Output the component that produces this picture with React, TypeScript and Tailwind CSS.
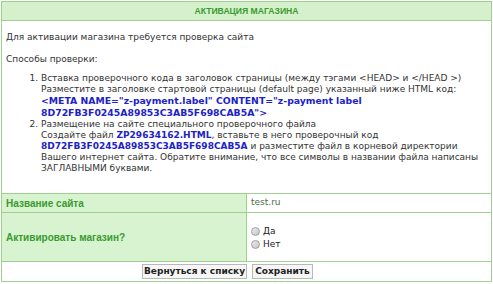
import React from "react";

const blue = "text-[#1c22c8] font-bold";
const arial = "font-['Liberation_Sans',_Arial,_sans-serif]";

export default function App() {
  return (
    <div className="w-[493px] h-[284px] bg-white font-['DejaVu_Sans',_Verdana,_sans-serif] text-[9px] text-[#333] pt-px pl-px">
      <div className="w-[491px] border border-[#9fd08f]">
        <div className={`h-[19px] bg-[#d5f1cc] border-b border-[#9fd08f] flex items-center justify-center text-[#3a9a2f] font-bold text-[8.6px] ${arial}`}>
          АКТИВАЦИЯ МАГАЗИНА
        </div>
        <div className="h-[172px] px-[4px] pt-[11px] leading-[11px]">
          <div>Для активации магазина требуется проверка сайта</div>
          <div className="mt-[11px]">Способы проверки:</div>
          <ol className="mt-[8px] pl-[35px] list-decimal">
            <li>
              Вставка проверочного кода в заголовок страницы (между тэгами &lt;HEAD&gt; и &lt;/HEAD &gt;)
              <br />
              Разместите в заголовке стартовой страницы (default page) указанный ниже HTML код:
              <br />
              <span className={`${blue} text-[9.3px]`}>
                &lt;META NAME="z-payment.label" CONTENT="z-payment label
                <br />
                8D72FB3F0245A89853C3AB5F698CAB5A"&gt;
              </span>
            </li>
            <li>
              Размещение на сайте специального проверочного файла
              <br />
              Создайте файл <span className={blue}>ZP29634162.HTML</span>, вставьте в него проверочный код
              <br />
              <span className={blue}>8D72FB3F0245A89853C3AB5F698CAB5A</span> и разместите файл в корневой директории
              <br />
              Вашего интернет сайта. Обратите внимание, что все символы в названии файла написаны
              <br />
              ЗАГЛАВНЫМИ буквами.
            </li>
          </ol>
        </div>
        <div className="border-t border-[#9fd08f]">
          <div className="flex h-[19px] border-b border-[#9fd08f]">
            <div className={`w-[245px] bg-[#d8f3d0] border-r border-[#9fd08f] flex items-center pl-[4px] text-[#3a9a2f] font-bold text-[10px] ${arial}`}>
              Название сайта
            </div>
            <div className="flex-1 flex items-center pl-[4px] text-[#4a6e46]">test.ru</div>
          </div>
          <div className="flex h-[49px] border-b border-[#9fd08f]">
            <div className={`w-[245px] bg-[#d8f3d0] border-r border-[#9fd08f] flex items-center pl-[4px] text-[#3a9a2f] font-bold text-[10px] ${arial}`}>
              Активировать магазин?
            </div>
            <div className="flex-1 flex flex-col justify-center pl-[4px] pt-[2px] leading-[13px] text-[#222]">
              <label className="flex items-center gap-[3px]">
                <span className="w-[9px] h-[9px] rounded-full border border-[#a0a0a0] bg-gradient-to-br from-[#ececec] to-[#c4c4c4]" />
                Да
              </label>
              <label className="flex items-center gap-[3px]">
                <span className="w-[9px] h-[9px] rounded-full border border-[#a0a0a0] bg-gradient-to-br from-[#ececec] to-[#c4c4c4]" />
                Нет
              </label>
            </div>
          </div>
          <div className="h-[19px] flex items-center">
            <div className="w-[245px] flex justify-end">
              <button className="h-[15px] w-[105px] border border-[#b8b8b8] bg-[#f6f6f6] font-bold text-[#222] text-[9px] leading-none">
                Вернуться к списку
              </button>
            </div>
            <div className="flex-1 pl-[5px]">
              <button className="h-[15px] w-[61px] border border-[#b8b8b8] bg-[#f6f6f6] font-bold text-[#222] text-[9px] leading-none">
                Сохранить
              </button>
            </div>
          </div>
        </div>
      </div>
    </div>
  );
}
